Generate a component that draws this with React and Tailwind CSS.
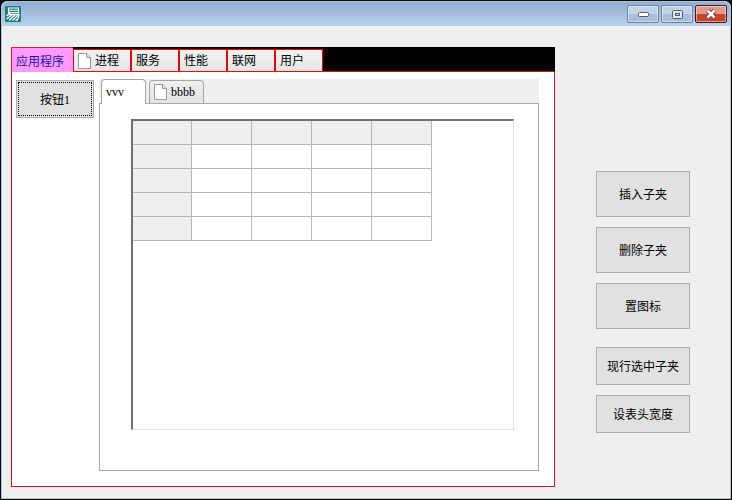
import { useState } from 'react'

const MAIN_TABS = ['应用程序', '进程', '服务', '性能', '联网', '用户']

const ACTIONS = [
  { label: '插入子夹', className: 'h-[46px]' },
  { label: '删除子夹', className: 'h-[46px] mt-2.5' },
  { label: '置图标', className: 'h-[46px] mt-2.5' },
  { label: '现行选中子夹', className: 'h-[38px] mt-[18px]' },
  { label: '设表头宽度', className: 'h-[38px] mt-2.5' },
]

function AppIcon() {
  return (
    <svg viewBox="0 0 16 16" className="size-4 shrink-0" fill="none" stroke="#fff">
      <rect width="16" height="16" rx="1.5" fill="#167c7c" stroke="none" />
      <path d="M3.500 2h10v4.500h-10zM3.500 4.300h10" strokeWidth="1.100" />
      <path d="M5.500 6.500L1.500 10M3.500 8.500H14l-1.500 5.500h-2" strokeWidth="1.300" />
      <path d="M7 9L1.500 13M10 9L4 14.500M12.500 9.500L7.500 14.500" strokeWidth="1.300" />
    </svg>
  )
}

function PageIcon() {
  return (
    <svg viewBox="0 0 13 16" className="h-4 w-[13px] shrink-0" fill="#fff" stroke="#999" strokeLinejoin="round">
      <path d="M.5.5h8l4 4v11H.5z" />
      <path d="M8.500.5v4h4" fill="#e5e5e5" />
    </svg>
  )
}

function TitleButtons() {
  const base = 'flex h-[18px] w-8 items-center justify-center rounded-[2px] border shadow-[inset_0_0_0_1px_rgba(255,255,255,0.45)]'
  const blue = 'border-[#6b83a3] bg-linear-to-b from-[#c0d3e9] from-50% to-[#a5bfdc] to-50%'
  return (
    <div className="flex gap-0.5">
      <button aria-label="最小化" className={`${base} ${blue}`}>
        <svg viewBox="0 0 11 5" className="h-[5px] w-[11px]">
          <rect x=".5" y=".5" width="10" height="4" rx="1" fill="#fff" stroke="#575c68" />
        </svg>
      </button>
      <button aria-label="最大化" className={`${base} ${blue}`}>
        <svg viewBox="0 0 11 9" className="h-[9px] w-[11px]" stroke="#575c68">
          <rect x=".5" y=".5" width="10" height="8" rx="1" fill="#dfe8f3" />
          <rect x="3.500" y="3.500" width="4" height="2" fill="#b5cbe3" />
        </svg>
      </button>
      <button aria-label="关闭" className={`${base} border-[#4b1620] bg-linear-to-b from-[#e09a8a] from-50% to-[#c8452c] to-50%`}>
        <svg viewBox="0 0 12 10" className="h-2.5 w-3" fill="none">
          <path d="M2.500 1.500l7 7M9.500 1.500l-7 7" stroke="#5b3a40" strokeWidth="4.500" />
          <path d="M2.500 1.500l7 7M9.500 1.500l-7 7" stroke="#fff" strokeWidth="2.600" />
        </svg>
      </button>
    </div>
  )
}

function MainTab({ label, first, icon, active, onClick }) {
  return (
    <button
      role="tab"
      aria-selected={active}
      onClick={onClick}
      className={`flex items-center whitespace-nowrap pl-1 ${first ? 'w-[62px] pt-1' : icon ? 'mt-0.5 w-[58px] pt-px' : 'mt-0.5 w-12 pt-px'} ${
        active
          ? 'border-t border-l border-[#e01b30] bg-[#ff99ff] text-[#1a10b0]'
          : 'border border-[#f00000] bg-linear-to-b from-[#f2f2f2] to-[#e6e6e6]'
      }`}
    >
      {icon && <span className="mr-1"><PageIcon /></span>}
      {label}
    </button>
  )
}

function Grid() {
  return (
    <table className="w-[299px] table-fixed border-separate border-spacing-0">
      <tbody>
        {[...Array(5)].map((_, r) => (
          <tr key={r}>
            {[...Array(5)].map((_, c) => (
              <td
                key={c}
                className={`h-6 border-r border-b border-[#b8b8b8] p-0 ${c === 0 ? 'w-[59px]' : 'w-[60px]'} ${r === 0 || c === 0 ? 'bg-[#efefef]' : 'bg-white'}`}
              />
            ))}
          </tr>
        ))}
      </tbody>
    </table>
  )
}

export default function App() {
  const [tab, setTab] = useState(0)

  return (
    <div className="flex min-h-screen flex-col bg-[#06090c] p-px font-['Liberation_Serif','Noto_Sans_CJK_SC',sans-serif] text-xs text-black">
      <div className="flex flex-1 flex-col rounded-t-md border border-[#a9c9d9] bg-[#efefef]">
        {/* Title bar */}
        <header className="flex h-6 items-center justify-between rounded-t-md bg-linear-to-b from-[#91aed0] to-[#b9d0e9] px-[3px]">
          <AppIcon />
          <TitleButtons />
        </header>

        <main className="flex flex-1 items-stretch pt-[21px] pr-10 pb-[11px] pl-[9px]">
          {/* Outer tabs */}
          <section className="flex min-w-0 flex-1 flex-col">
            <div role="tablist" className="flex h-[25px] bg-black shadow-[inset_0_-1px_0_#d01020]">
              {MAIN_TABS.map((label, i) => (
                <MainTab key={label} label={label} first={i === 0} icon={i === 1} active={tab === i} onClick={() => setTab(i)} />
              ))}
            </div>

            <div className="flex flex-1 border border-t-0 border-[#c01c28] bg-white pt-[7px] pr-[15px] pb-[15px] pl-1">
              <button className="mt-px h-[38px] w-[78px] shrink-0 border border-[#adadad] bg-[#e1e1e1] p-px">
                <span className="flex h-full items-center justify-center border border-dotted border-black pt-0.5">按钮1</span>
              </button>

              {/* Inner tabs */}
              <div className="ml-[5px] flex min-w-0 flex-1 flex-col">
                <div role="tablist" className="flex h-6 bg-[#efefef] pl-0.5">
                  <button role="tab" aria-selected="true" className="relative -mb-px h-[25px] w-[45px] rounded-t-[4px] border border-b-0 border-[#a5a5a5] bg-white pl-1 text-left">
                    vvv
                  </button>
                  <button role="tab" aria-selected="false" className="mt-px ml-[3px] flex w-[55px] items-center gap-1 rounded-t-[4px] border border-b-0 border-[#a5a5a5] bg-linear-to-b from-[#f0f0f0] to-[#e2e2e2] pl-1">
                    <PageIcon />
                    bbbb
                  </button>
                </div>
                <div className="flex flex-1 border border-[#a9a9a9] bg-white pt-[15px] pr-6 pb-10 pl-[31px]">
                  <div className="min-w-0 flex-1 border-t-2 border-r border-b border-l-2 border-t-[#707070] border-r-[#e3e3e3] border-b-[#e3e3e3] border-l-[#707070]">
                    <Grid />
                  </div>
                </div>
              </div>
            </div>
          </section>

          {/* Actions */}
          <aside className="ml-[41px] flex w-[94px] shrink-0 flex-col pt-[124px]">
            {ACTIONS.map(a => (
              <button key={a.label} className={`shrink-0 border border-[#adadad] bg-[#e1e1e1] pt-0.5 ${a.className}`}>
                {a.label}
              </button>
            ))}
          </aside>
        </main>
      </div>
    </div>
  )
}
